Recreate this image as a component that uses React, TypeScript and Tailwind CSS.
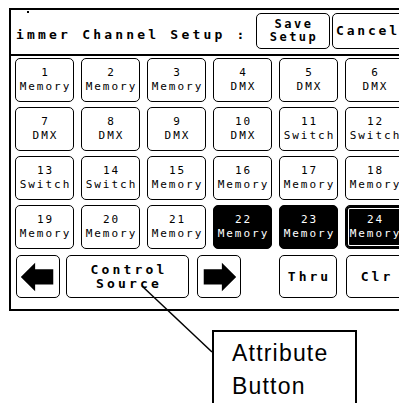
import React from 'react'

const channels: [string, string][] = [
  ['1', 'Memory'], ['2', 'Memory'], ['3', 'Memory'], ['4', 'DMX'], ['5', 'DMX'], ['6', 'DMX'],
  ['7', 'DMX'], ['8', 'DMX'], ['9', 'DMX'], ['10', 'DMX'], ['11', 'Switch'], ['12', 'Switch'],
  ['13', 'Switch'], ['14', 'Switch'], ['15', 'Memory'], ['16', 'Memory'], ['17', 'Memory'], ['18', 'Memory'],
  ['19', 'Memory'], ['20', 'Memory'], ['21', 'Memory'], ['22', 'Memory'], ['23', 'Memory'], ['24', 'Memory'],
]

const mono = "font-['DejaVu_Sans_Mono','Liberation_Mono',monospace]"

function Arrow({ flip }: { flip?: boolean }) {
  return (
    <svg width="44" height="43" viewBox="0 0 44 43" className={flip ? '-scale-x-100' : ''}>
      <polygon points="4,22 19,7 19,14 38,14 38,30 19,30 19,37" fill="#000" />
    </svg>
  )
}

function ChannelButton({ num, label, state }: { num: string; label: string; state: 'off' | 'on' | 'focus' }) {
  let tone = 'bg-white text-black'
  if (state === 'on') tone = 'bg-black text-white'
  if (state === 'focus') tone = 'bg-black text-white shadow-[inset_0_0_0_2px_#000,inset_0_0_0_3px_#fff]'
  return (
    <div className={`flex flex-col items-center justify-center rounded-[5px] border border-black ${tone}`}>
      <span className={`${mono} text-[11px] leading-[14px] tracking-[2px] pl-[2px]`}>{num}</span>
      <span className={`${mono} text-[11px] leading-[14px] tracking-[2px] pl-[2px]`}>{label}</span>
    </div>
  )
}

export default function App() {
  return (
    <div className="relative w-[399px] h-[403px] overflow-hidden bg-white">
      {/* tiny marker above the title */}
      <span className="absolute left-[27px] top-[11px] w-[2px] h-[2px] bg-black" />

      {/* panel */}
      <div className="ml-[9px] mt-[8px] w-[410px] h-[303px] border-2 border-r-0 border-black">
        {/* header */}
        <div className="flex h-[41px] pt-[3px] border-b-2 border-black box-content">
          <div className={`w-[245px] pl-[5px] pt-[2px] flex items-center ${mono} font-bold text-[13px] tracking-[3.2px] text-black whitespace-nowrap`}>
            immer Channel Setup :
          </div>
          <div className={`w-[74px] h-[36px] rounded-[5px] border border-black flex flex-col items-center justify-center ${mono} font-bold text-[12px] leading-[13px] tracking-[2.5px] pl-[2px]`}>
            <span>Save</span>
            <span>Setup</span>
          </div>
          <div className={`ml-[2px] w-[72px] h-[36px] rounded-[5px] border border-black flex items-center pl-[3px] ${mono} font-bold text-[13px] tracking-[2.8px]`}>
            Cancel
          </div>
        </div>

        {/* channel grid */}
        <div className="pl-[4px] pt-[2px]">
          <div className="grid grid-cols-[repeat(6,59px)] auto-rows-[44px] gap-x-[7px] gap-y-[5px]">
            {channels.map(([n, l]) => (
              <ChannelButton
                key={n}
                num={n}
                label={l}
                state={n === '22' || n === '23' ? 'on' : n === '24' ? 'focus' : 'off'}
              />
            ))}
          </div>

          {/* bottom row */}
          <div className="flex mt-[6px] ml-[1px] h-[43px]">
            <div className="w-[44px] rounded-[5px] border border-black flex items-center justify-center overflow-hidden">
              <Arrow />
            </div>
            <div className={`ml-[6px] w-[123px] rounded-[5px] border border-black flex flex-col items-center justify-center ${mono} font-bold text-[13px] leading-[14px] tracking-[3.2px] pl-[3px]`}>
              <span>Control</span>
              <span>Source</span>
            </div>
            <div className="ml-[8px] w-[44px] rounded-[5px] border border-black flex items-center justify-center overflow-hidden">
              <Arrow flip />
            </div>
            <div className={`ml-[38px] w-[58px] rounded-[5px] border border-black flex items-center justify-center ${mono} font-bold text-[13px] tracking-[3px] pl-[3px]`}>
              Thru
            </div>
            <div className={`ml-[9px] w-[59px] rounded-[5px] border border-black flex items-center justify-center ${mono} font-bold text-[13px] tracking-[3px] pl-[3px]`}>
              Clr
            </div>
          </div>
        </div>
      </div>

      {/* callout */}
      <div className="ml-[212px] mt-[19px] w-[145px] h-[90px] border-2 border-black pl-[18px] pt-[5px]">
        <div className="font-['Liberation_Sans',Arial,sans-serif] text-[23px] leading-[33px] tracking-[1.2px] text-black">
          <div>Attribute</div>
          <div>Button</div>
        </div>
      </div>

      <svg className="absolute inset-0 pointer-events-none" width="399" height="403">
        <line x1="142" y1="286" x2="212" y2="352" stroke="#000" strokeWidth="1.5" />
      </svg>
    </div>
  )
}
